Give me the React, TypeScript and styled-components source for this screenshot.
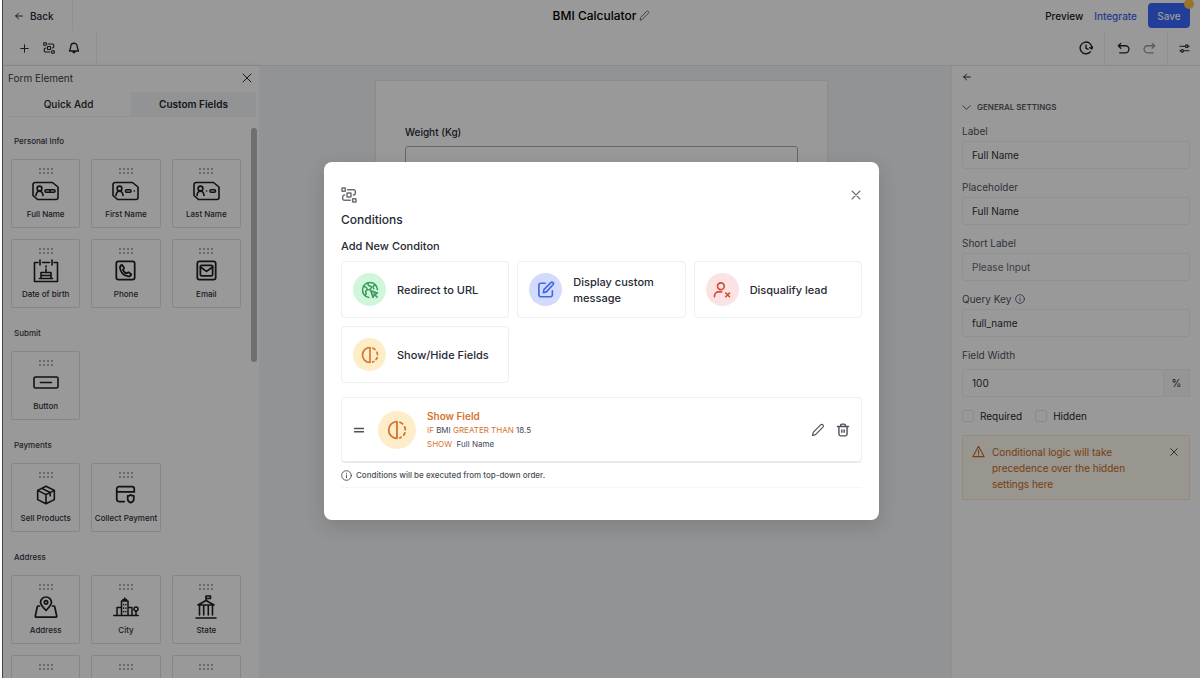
import React from "react";
import styled, { createGlobalStyle, css } from "styled-components";

const GlobalStyle = createGlobalStyle`
  *, *::before, *::after { box-sizing: border-box; }
  body { margin: 0; background: #fff; overflow: hidden; }
  body, button, input { font-family: Inter, "Liberation Sans", sans-serif; }
  button { padding: 0; border: 0; background: none; color: inherit; cursor: pointer; }
  h1, h2, h3, p { margin: 0; font-weight: 500; }
`;

/* ---------- icons ---------- */

type IconProps = { size?: number; width?: number; stroke?: number; box?: string; children?: React.ReactNode };

const Icon = ({ size = 16, width, stroke = 2, box = "0 0 24 24", children }: IconProps) => (
  <svg
    width={width ?? size}
    height={size}
    viewBox={box}
    fill="none"
    stroke="currentColor"
    strokeWidth={stroke}
    strokeLinecap="round"
    strokeLinejoin="round"
    aria-hidden="true"
  >
    {children}
  </svg>
);

const BackArrow = ({ size = 10 }: { size?: number }) => (
  <Icon size={size} stroke={2.4}><path d="M20 12H4M11 5l-7 7 7 7" /></Icon>
);
const Cross = ({ size = 14, stroke = 2 }: { size?: number; stroke?: number }) => (
  <Icon size={size} stroke={stroke}><path d="M4 4l16 16M20 4L4 20" /></Icon>
);
const Pencil = ({ size = 14, stroke = 2 }: { size?: number; stroke?: number }) => (
  <Icon size={size} stroke={stroke}>
    <path d="M2.500 21.500l1.300-5.500L16.500 3.200c1.200-1.100 2.800-1 3.900 0s1.100 2.700 0 3.900L7.800 19.900z" />
  </Icon>
);
const Flow = ({ size = 16 }: { size?: number }) => (
  <Icon size={size} stroke={2.2}>
    <rect x="1.500" y="1.500" width="5" height="5" rx="0.500" />
    <rect x="17.500" y="17.500" width="5" height="5" rx="0.500" />
    <rect x="9" y="9" width="6" height="6" rx="0.500" />
    <path d="M10 4h9a2.500 2.500 0 0 1 2.500 2.500V9a3 3 0 0 1-3 3M14 20H5a2.500 2.500 0 0 1-2.500-2.500V15a3 3 0 0 1 3-3" />
  </Icon>
);
const Info = ({ size = 11 }: { size?: number }) => (
  <Icon size={size} stroke={2}>
    <circle cx="12" cy="12" r="10.500" />
    <path d="M12 11v6M12 7v.3" />
  </Icon>
);
const HalfCircle = ({ size = 18 }: { size?: number }) => (
  <Icon size={size} stroke={2.2}>
    <path d="M12 2v20M12 2a10 10 0 0 0 0 20M15.500 2.700a10 10 0 0 1 3.200 2M21.200 8.300a10 10 0 0 1 .8 3.200M21.500 15.500a10 10 0 0 1-1.500 2.600M17 20.700l-1.500.7" />
  </Icon>
);
const GlobeCursor = () => (
  <Icon size={18} stroke={2}>
    <path d="M10.500 22A10 10 0 1 1 22 11.500" />
    <path d="M3 7l4 1.500 1.500 3L6 14l1 3-1.500 2M9 2.500l1 3.500 4 1.500-1 3-2.500 1.500M19 5l-3 2.500 1 3" />
    <path d="M13 13l9 3-4 2-2 4z" fill="currentColor" fillOpacity="0.400" />
    <path d="M18 18l3.500 3.500" />
  </Icon>
);
const Compose = () => (
  <Icon size={18} stroke={2.2}>
    <path d="M11 3H5a2.500 2.500 0 0 0-2.500 2.500v13A2.500 2.500 0 0 0 5 21h13a2.500 2.500 0 0 0 2.500-2.500V13" />
    <path d="M8.500 15.500l.7-4L18.500 2.200c.9-.8 2-.8 2.800 0s.8 2 0 2.800L12.500 14.500z" />
  </Icon>
);
const UserX = () => (
  <Icon size={18} stroke={2.200}>
    <circle cx="10.500" cy="7" r="4.500" />
    <path d="M2 21v-1a5.500 5.500 0 0 1 5.500-5.500h4M17 16l5 5M22 16l-5 5" />
  </Icon>
);
const Trash = () => (
  <Icon size={14} stroke={2.400}>
    <path d="M2.500 6h19M5 6v13a3 3 0 0 0 3 3h8a3 3 0 0 0 3-3V6M8 6V4a2 2 0 0 1 2-2h4a2 2 0 0 1 2 2v2M10 12v4M14 12v4" />
  </Icon>
);
const Bell = () => (
  <Icon size={12} stroke={2.600}>
    <path d="M12 2.500a6.500 6.500 0 0 0-6.500 6.500c0 5-2.500 6.500-2.500 9h18c0-2.500-2.500-4-2.500-9A6.500 6.500 0 0 0 12 2.500zM9.500 18a2.500 3.500 0 0 0 5 0" />
  </Icon>
);
const Plus = () => <Icon size={9} stroke={2.600}><path d="M12 2v20M2 12h20" /></Icon>;
const History = () => (
  <Icon size={14} stroke={2.400}>
    <path d="M19.500 18.500A10 10 0 1 1 22 12M12 7v5.500l3.500 1.500M18.500 11.500l3.500 2 1.500-3.500" />
  </Icon>
);
const Undo = () => (
  <Icon size={13} stroke={2.500}><path d="M7 2.500L2.500 7 7 11.500M3 7h12.500a6.500 6.500 0 0 1 0 13H5" /></Icon>
);
const Redo = () => (
  <Icon size={13} stroke={2.500}><path d="M17 2.500L21.500 7 17 11.500M21 7H8.500a6.500 6.500 0 0 0 0 13H19" /></Icon>
);
const Sliders = () => (
  <Icon size={11} stroke={2.500}>
    <path d="M2 7h12M20 7h2M2 17h2M10 17h12" /><circle cx="17" cy="7" r="2.800" /><circle cx="7" cy="17" r="2.800" />
  </Icon>
);
const Chevron = () => <Icon size={9} stroke={2.600}><path d="M2 7l10 10L22 7" /></Icon>;
const Warning = () => (
  <Icon size={13} stroke={2}><path d="M12 2.500L1.500 21.500h21zM12 9.500v6M12 18.500v.2" /></Icon>
);
const Handle = () => <Icon size={12} stroke={2.600}><path d="M3 9h18M3 15.500h18" /></Icon>;

const Dots = () => (
  <svg width="14" height="6" viewBox="0 0 14 6" fill="#8a8d93" aria-hidden="true">
    {[1, 5, 9, 13].map((x) => (
      <React.Fragment key={x}>
        <circle cx={x} cy="1" r="0.9" />
        <circle cx={x} cy="5" r="0.9" />
      </React.Fragment>
    ))}
  </svg>
);

const Badge = ({ children }: { children: React.ReactNode }) => (
  <Icon width={27} size={20} stroke={1.600} box="0 0 27 20">
    <path d="M3 1.500h17.500l5.500 4.500V16.500a2 2 0 0 1-2 2H5.500L1 14.500V3.500a2 2 0 0 1 2-2z" />
    <circle cx="7.500" cy="7.500" r="2.400" />
    <path d="M4 14.500c.2-2.700 1.500-4.200 3.500-4.200s3.300 1.500 3.500 4.200" />
    {children}
  </Icon>
);

const fieldIcons: Record<string, React.ReactNode> = {
  "Full Name": <Badge><rect x="13" y="8.700" width="10" height="2.600" rx="1" /><path d="M18 9v2" /></Badge>,
  "First Name": <Badge><rect x="13.500" y="8.700" width="5.500" height="2.600" rx="1" /><path d="M22.300 10h.1" /></Badge>,
  "Last Name": <Badge><rect x="17" y="8.700" width="5.500" height="2.600" rx="1" /><path d="M13.500 10h.1" /></Badge>,
  "Date of birth": (
    <Icon width={26} size={24} stroke={1.600} box="0 0 26 24">
      <path d="M5 3.500H1.500v19h23v-19H21M9.500 3.500h7M7 1v5M19 1v5" />
      <path d="M8 19v-5.500h10V19M6.500 19.500h13M8 16.500h10M13 13.500v-3.500M13 8V7" />
    </Icon>
  ),
  Phone: (
    <Icon size={21} stroke={2}>
      <rect x="1.500" y="1.500" width="21" height="21" rx="2.500" />
      <path d="M8 5.500c-1.500.5-2.500 1.500-2.300 3.500.5 5 4.300 9.200 9.500 9.700 1.800.1 3-.9 3.300-2.400l-3.200-2.400-2.300 1.500c-1.800-.8-3.200-2.200-4-4l1.500-2.200z" />
    </Icon>
  ),
  Email: (
    <Icon size={21} stroke={2}>
      <rect x="1.500" y="1.500" width="21" height="21" rx="2.500" />
      <rect x="5" y="6" width="14" height="12" rx="1.500" />
      <path d="M5 8l7 5 7-5" />
    </Icon>
  ),
  Button: (
    <Icon width={26} size={13} stroke={1.600} box="0 0 26 13">
      <rect x="1" y="1" width="24" height="11" rx="1.500" /><path d="M7.500 6.500h11" />
    </Icon>
  ),
  "Sell Products": (
    <Icon size={20} stroke={1.900}>
      <path d="M12 1.500l10 5v11l-10 5-10-5v-11zM2 6.500l10 5 10-5M12 11.500v11M7 4l10 5v4" />
    </Icon>
  ),
  "Collect Payment": (
    <Icon size={21} stroke={2}>
      <path d="M10.500 20H4.500A2.500 2.500 0 0 1 2 17.500v-12A2.500 2.500 0 0 1 4.500 3h15A2.500 2.500 0 0 1 22 5.500V9M2 9h20M15 13.500c1 0 2-.3 3-1 1 .7 2 1 3.500 1v3.500c0 2-1.500 3.500-3.500 4.300-2-.8-3.500-2.300-3.500-4.300v-3.500z" />
    </Icon>
  ),
  Address: (
    <Icon width={24} size={22} stroke={1.700} box="0 0 24 22">
      <path d="M12 14.500C8.500 11 6.500 9 6.500 6.300a5.500 5.300 0 0 1 11 0c0 2.700-2 4.700-5.500 8.200z" />
      <circle cx="12" cy="6.300" r="1.700" />
      <path d="M5.500 10H4.300a1 1 0 0 0-1 .8L1.300 20a1 1 0 0 0 1 1.200h19.400a1 1 0 0 0 1-1.200l-2-9.200a1 1 0 0 0-1-.8h-1.200" />
    </Icon>
  ),
  City: (
    <Icon width={26} size={20} stroke={1.500} box="0 0 26 20">
      <path d="M0.800 18.500h24.400M8.500 18.500V4h6.500v14.500M10 4V2.500h3.500V4M11.800 2.500V1M4 18.500V10.500h4.500M15 10.500h4v8M23 18.500V14" />
      <circle cx="23" cy="12" r="2" />
      <path d="M10.700 7.500v.2M12.900 7.500v.2M10.700 11v.2M12.900 11v.2M10.700 14.500v.2M12.900 14.500v.2" />
    </Icon>
  ),
  State: (
    <Icon width={22} size={24} stroke={1.600} box="0 0 22 24">
      <path d="M1 23h20M4.500 11v9M8.700 11v9M13.300 11v9M17.500 11v9M3 10l8-4.500 8 4.500zM11 5.500V1h4.500v2.500H11" />
    </Icon>
  ),
};

/* ---------- shell & header ---------- */

const Shell = styled.div`
  position: relative;
  display: flex;
  flex-direction: column;
  height: 100vh;
  margin-left: 2px;
  border-left: 1px solid #444;
  background: #fff;
  color: #252a34;
  overflow: hidden;
`;

const TopBar = styled.header`
  display: grid;
  grid-template-columns: 1fr auto 1fr;
  align-items: center;
  height: 31px;
`;

const ToolBar = styled.div`
  display: flex;
  justify-content: space-between;
  height: 34px;
`;

const BackButton = styled.button`
  display: flex;
  align-items: center;
  gap: 6px;
  width: 70px;
  height: 31px;
  padding-left: 11px;
  border-right: 1px solid #f2f2f3;
  font-size: 10px;
  font-weight: 500;
`;

const Title = styled.h1`
  display: flex;
  align-items: center;
  gap: 3px;
  font-size: 12px;
  color: #000;
  svg { color: #666; }
`;

const Actions = styled.div`
  display: flex;
  justify-content: flex-end;
  align-items: center;
  gap: 11px;
  padding-right: 10px;
  font-size: 10px;
  font-weight: 500;
`;

const TextLink = styled.a<{ $accent?: boolean }>`
  color: ${(p) => (p.$accent ? "#4060f0" : "#16181d")};
  text-decoration: none;
`;

const SaveButton = styled.button`
  position: relative;
  width: 42px;
  height: 25px;
  border-radius: 4px;
  background: #3968ff;
  color: #fff;
  font-size: 10px;
  font-weight: 500;
`;

const SaveDot = styled.span`
  position: absolute;
  top: -4px;
  right: -4px;
  width: 10px;
  height: 10px;
  border-radius: 50%;
  background: #ffc14a;
`;

const Tools = styled.div<{ $side: "left" | "right" }>`
  display: flex;
  align-items: center;
  ${(p) =>
    p.$side === "left"
      ? css`gap: 1px; padding: 0 10px 0 9px; border-right: 1px solid #f0f0f1;`
      : css`gap: 0;`}
`;

const ToolGroup = styled.div`
  display: flex;
  align-items: center;
  gap: 2px;
  height: 34px;
  padding: 0 6px;
  & + & { border-left: 1px solid #f0f0f1; }
  &:last-child { padding: 0 4px; }
`;

const ToolButton = styled.button<{ $muted?: boolean }>`
  display: grid;
  place-items: center;
  width: 24px;
  height: 24px;
  color: ${(p) => (p.$muted ? "#96989d" : "#22262e")};
`;

/* ---------- left panel ---------- */

const Body = styled.div`
  display: flex;
  flex: 1;
  min-height: 0;
  border-top: 1px solid #e6e7ea;
`;

const ElementPanel = styled.aside`
  display: flex;
  flex-direction: column;
  flex: 0 0 256px;
  background: #fff;
  box-shadow: 1px 0 4px rgba(40, 45, 60, 0.12);
`;

const PanelHead = styled.div`
  display: flex;
  justify-content: space-between;
  align-items: center;
  height: 24px;
  padding: 0 6px 0 5px;
`;

const PanelTitle = styled.h2`
  font-size: 10px;
  font-weight: 400;
  color: #3a3e47;
`;

const Tabs = styled.div`
  display: grid;
  grid-template-columns: 1fr 1fr;
  height: 27px;
  padding: 2px 3px 0;
  margin-bottom: 11px;
`;

const Tab = styled.button<{ $active?: boolean }>`
  border-bottom: 1px solid #f0f0f2;
  background: ${(p) => (p.$active ? "#f4f5f7" : "#fff")};
  color: #22262e;
  font-size: 10px;
  font-weight: ${(p) => (p.$active ? 600 : 500)};
`;

const ScrollArea = styled.div`
  display: flex;
  justify-content: space-between;
  flex: 1;
  min-height: 0;
  padding: 0 2px 0 8px;
  overflow: hidden;
`;

const Sections = styled.div`
  display: flex;
  flex-direction: column;
  gap: 17px;
  flex: 0 0 230px;
  padding-top: 5px;
`;

const Thumb = styled.div`
  width: 6px;
  height: 234px;
  border-radius: 3px;
  background: #b9babd;
`;

const SectionTitle = styled.h3`
  padding-left: 3px;
  margin-bottom: 10px;
  font-size: 8px;
  line-height: 16px;
  color: #343842;
`;

const CardGrid = styled.div`
  display: grid;
  grid-template-columns: repeat(3, 1fr);
  gap: 11px;
`;

const FieldCard = styled.button`
  display: grid;
  grid-template-rows: 6px 24px 12px;
  justify-items: center;
  align-items: center;
  align-content: center;
  row-gap: 5px;
  height: 69px;
  border: 1px solid #e0e2e4;
  border-radius: 2px;
  font-size: 8px;
  font-weight: 500;
  line-height: 12px;
  white-space: nowrap;
  color: #2c313b;
  svg { color: #1b1e24; }
`;

/* ---------- canvas ---------- */

const Canvas = styled.main`
  flex: 1;
  min-width: 0;
  padding: 15px 124px 0 117px;
  background: #f4f5f8;
`;

const FormSheet = styled.div`
  display: flex;
  flex-direction: column;
  gap: 6px;
  height: 400px;
  padding: 43px 29px 0;
  background: #fff;
  box-shadow: 0 0 2px rgba(60, 65, 80, 0.2);
`;

const SheetLabel = styled.label`
  font-size: 10px;
  font-weight: 500;
  line-height: 16px;
`;

const SheetInput = styled.input`
  width: 100%;
  height: 34px;
  border: 1px solid #aaacb2;
  border-radius: 3px;
  background: #fff;
`;

/* ---------- right panel ---------- */

const SettingsPanel = styled.aside`
  flex: 0 0 249px;
  padding: 3px 10px 0;
  border-left: 1px solid #eceef0;
  background: #fff;
`;

const IconButton = styled.button`
  display: flex;
  align-items: center;
  height: 16px;
`;

const GroupToggle = styled.button`
  display: flex;
  align-items: center;
  gap: 6px;
  height: 16px;
  margin: 14px 0 8px;
  color: #565b65;
  font-size: 8px;
  font-weight: 600;
`;

const Field = styled.div`
  display: flex;
  flex-direction: column;
  gap: 3px;
  margin-bottom: 10px;
`;

const FieldLabel = styled.label`
  display: flex;
  align-items: center;
  gap: 4px;
  height: 15px;
  font-size: 10px;
  color: #50555f;
`;

const TextInput = styled.input`
  flex: 1;
  min-width: 0;
  width: 100%;
  min-height: 28px;
  padding: 0 9px;
  border: 1px solid #eff0f1;
  border-radius: 3px;
  background: #fff;
  color: #2c313b;
  font-size: 10px;
  &::placeholder { color: #656a74; opacity: 1; }
`;

const WidthGroup = styled.div`
  display: flex;
  margin-top: 4px;
`;

const Unit = styled.span`
  display: grid;
  place-items: center;
  width: 26px;
  border: 1px solid #eff0f1;
  border-left: 0;
  background: #f8f8f9;
  font-size: 10px;
`;

const Checks = styled.div`
  display: flex;
  gap: 13px;
  height: 18px;
  margin-bottom: 10px;
`;

const Check = styled.label`
  display: flex;
  align-items: center;
  gap: 6px;
  font-size: 10px;
  input {
    appearance: none;
    width: 12px;
    height: 12px;
    margin: 0;
    border: 1px solid #e6e7e9;
    border-radius: 2px;
    background: #fff;
  }
`;

const Alert = styled.div`
  display: flex;
  align-items: flex-start;
  gap: 7px;
  padding: 8px 10px 7px 9px;
  border: 1px solid #f6e9cf;
  background: #fff9ee;
  color: #c66a1e;
  font-size: 10px;
  line-height: 16px;
  p { flex: 1; font-weight: 400; max-width: 138px; }
  svg { flex: none; margin-top: 1px; }
  button { margin-left: auto; height: 16px; color: #50555f; }
`;

/* ---------- modal ---------- */

const Overlay = styled.div`
  position: absolute;
  inset: 0;
  display: flex;
  align-items: center;
  justify-content: center;
  padding-top: 4px;
  background: rgba(0, 0, 0, 0.4);
`;

const Modal = styled.section`
  width: 555px;
  max-width: 100%;
  padding: 24px 17px 32px;
  border-radius: 8px;
  background: #fff;
  box-shadow: 0 6px 20px rgba(0, 0, 0, 0.14);
`;

const ModalHead = styled.div`
  display: flex;
  justify-content: space-between;
  align-items: center;
  height: 18px;
  margin-bottom: 7px;
  color: #6a6e76;
`;

const ModalTitle = styled.h2`
  margin-bottom: 9px;
  font-size: 12px;
  line-height: 18px;
`;

const ModalSubtitle = styled.h3`
  margin-bottom: 7px;
  font-size: 11px;
  line-height: 16px;
`;

const OptionGrid = styled.div`
  display: grid;
  grid-template-columns: repeat(3, 1fr);
  gap: 8px;
  margin-bottom: 14px;
`;

const Option = styled.button`
  display: flex;
  align-items: center;
  gap: 11px;
  height: 57px;
  padding: 0 11px;
  border: 1px solid #eeeff1;
  border-radius: 4px;
  font-size: 11px;
  font-weight: 500;
  line-height: 16px;
  text-align: left;
`;

const tones = {
  green: ["#d0f7da", "#3a9a62"],
  blue: ["#d3dbfc", "#3f68ea"],
  red: ["#fbe3e3", "#d64b3c"],
  amber: ["#fdeec9", "#d6742c"],
};

const Disc = styled.span<{ $tone: keyof typeof tones; $size: number }>`
  display: grid;
  place-items: center;
  flex: none;
  width: ${(p) => p.$size}px;
  height: ${(p) => p.$size}px;
  border-radius: 50%;
  background: ${(p) => tones[p.$tone][0]};
  color: ${(p) => tones[p.$tone][1]};
`;

const RuleRow = styled.div`
  display: flex;
  align-items: center;
  height: 66px;
  padding: 0 11px;
  border: 1px solid #eeeff1;
  border-bottom: 2px solid #e9eaec;
  border-radius: 4px;
  color: #4b4f58;
`;

const RuleText = styled.div`
  flex: 1;
  margin-left: 11px;
  font-size: 8px;
  line-height: 14px;
  color: #3f4657;
  h3 { font-size: 10px; font-weight: 600; color: #d6742c; }
`;

const Keyword = styled.span`
  color: #d6742c;
`;

const RuleActions = styled.div`
  display: flex;
  gap: 11px;
  button { display: flex; }
`;

const HandleSlot = styled.span`
  display: flex;
  margin-right: 13px;
`;

const Note = styled.p`
  display: flex;
  align-items: center;
  gap: 4px;
  height: 25px;
  border-bottom: 1px solid #f6f6f8;
  font-size: 8px;
  color: #4b4f58;
`;

type FieldItem = { id: string; label?: string };

const named = (...labels: string[]): FieldItem[] => labels.map((label) => ({ id: label, label }));

const sections: { title: string; items: FieldItem[] }[] = [
  {
    title: "Personal Info",
    items: named("Full Name", "First Name", "Last Name", "Date of birth", "Phone", "Email"),
  },
  { title: "Submit", items: named("Button") },
  { title: "Payments", items: named("Sell Products", "Collect Payment") },
  {
    title: "Address",
    items: [...named("Address", "City", "State"), { id: "slot-1" }, { id: "slot-2" }, { id: "slot-3" }],
  },
];

const options: { label: string; tone: keyof typeof tones; icon: React.ReactNode }[] = [
  { label: "Redirect to URL", tone: "green", icon: <GlobeCursor /> },
  { label: "Display custom message", tone: "blue", icon: <Compose /> },
  { label: "Disqualify lead", tone: "red", icon: <UserX /> },
  { label: "Show/Hide Fields", tone: "amber", icon: <HalfCircle /> },
];

export default function App() {
  return (
    <>
      <GlobalStyle />
      <Shell>
        <TopBar>
          <BackButton><BackArrow />Back</BackButton>
          <Title>BMI Calculator <Pencil size={11} stroke={2} /></Title>
          <Actions>
            <TextLink href="#preview">Preview</TextLink>
            <TextLink href="#integrate" $accent>Integrate</TextLink>
            <SaveButton>Save<SaveDot /></SaveButton>
          </Actions>
        </TopBar>
        <ToolBar>
          <Tools $side="left">
            <ToolButton aria-label="Add"><Plus /></ToolButton>
            <ToolButton aria-label="Conditions"><Flow size={12} /></ToolButton>
            <ToolButton aria-label="Notifications"><Bell /></ToolButton>
          </Tools>
          <Tools $side="right">
            <ToolGroup><ToolButton aria-label="History"><History /></ToolButton></ToolGroup>
            <ToolGroup>
              <ToolButton aria-label="Undo"><Undo /></ToolButton>
              <ToolButton aria-label="Redo" $muted><Redo /></ToolButton>
            </ToolGroup>
            <ToolGroup><ToolButton aria-label="Options"><Sliders /></ToolButton></ToolGroup>
          </Tools>
        </ToolBar>

        <Body>
          <ElementPanel>
            <PanelHead>
              <PanelTitle>Form Element</PanelTitle>
              <IconButton aria-label="Close panel"><Cross size={12} /></IconButton>
            </PanelHead>
            <Tabs>
              <Tab>Quick Add</Tab>
              <Tab $active>Custom Fields</Tab>
            </Tabs>
            <ScrollArea>
              <Sections>
                {sections.map((s) => (
                  <section key={s.title}>
                    <SectionTitle>{s.title}</SectionTitle>
                    <CardGrid>
                      {s.items.map((item) => (
                        <FieldCard key={item.id}>
                          <Dots />
                          {fieldIcons[item.id]}
                          {item.label && <span>{item.label}</span>}
                        </FieldCard>
                      ))}
                    </CardGrid>
                  </section>
                ))}
              </Sections>
              <Thumb />
            </ScrollArea>
          </ElementPanel>

          <Canvas>
            <FormSheet>
              <SheetLabel htmlFor="weight">Weight (Kg)</SheetLabel>
              <SheetInput id="weight" />
            </FormSheet>
          </Canvas>

          <SettingsPanel>
            <IconButton aria-label="Back to list"><BackArrow /></IconButton>
            <GroupToggle><Chevron />GENERAL SETTINGS</GroupToggle>
            <Field>
              <FieldLabel htmlFor="label">Label</FieldLabel>
              <TextInput id="label" defaultValue="Full Name" />
            </Field>
            <Field>
              <FieldLabel htmlFor="placeholder">Placeholder</FieldLabel>
              <TextInput id="placeholder" defaultValue="Full Name" />
            </Field>
            <Field>
              <FieldLabel htmlFor="short">Short Label</FieldLabel>
              <TextInput id="short" placeholder="Please Input" />
            </Field>
            <Field>
              <FieldLabel htmlFor="query">Query Key <Info size={10} /></FieldLabel>
              <TextInput id="query" defaultValue="full_name" />
            </Field>
            <Field>
              <FieldLabel htmlFor="width">Field Width</FieldLabel>
              <WidthGroup>
                <TextInput id="width" defaultValue="100" />
                <Unit>%</Unit>
              </WidthGroup>
            </Field>
            <Checks>
              <Check><input type="checkbox" />Required</Check>
              <Check><input type="checkbox" />Hidden</Check>
            </Checks>
            <Alert>
              <Warning />
              <p>Conditional logic will take precedence over the hidden settings here</p>
              <button aria-label="Dismiss"><Cross size={10} stroke={2.400} /></button>
            </Alert>
          </SettingsPanel>
        </Body>

        <Overlay>
          <Modal role="dialog" aria-modal="true" aria-labelledby="dialog-title">
            <ModalHead>
              <Flow size={16} />
              <IconButton aria-label="Close"><Cross size={12} stroke={2.200} /></IconButton>
            </ModalHead>
            <ModalTitle id="dialog-title">Conditions</ModalTitle>
            <ModalSubtitle>Add New Conditon</ModalSubtitle>
            <OptionGrid>
              {options.map((o) => (
                <Option key={o.label}>
                  <Disc $tone={o.tone} $size={33}>{o.icon}</Disc>
                  <span>{o.label}</span>
                </Option>
              ))}
            </OptionGrid>
            <RuleRow>
              <HandleSlot><Handle /></HandleSlot>
              <Disc $tone="amber" $size={38}><HalfCircle size={20} /></Disc>
              <RuleText>
                <h3>Show Field</h3>
                <div><Keyword>IF</Keyword> BMI <Keyword>GREATER THAN</Keyword> 18.5</div>
                <div><Keyword>SHOW</Keyword>&nbsp; Full Name</div>
              </RuleText>
              <RuleActions>
                <button aria-label="Edit condition"><Pencil /></button>
                <button aria-label="Delete condition"><Trash /></button>
              </RuleActions>
            </RuleRow>
            <Note><Info />Conditions will be executed from top-down order.</Note>
          </Modal>
        </Overlay>
      </Shell>
    </>
  );
}
